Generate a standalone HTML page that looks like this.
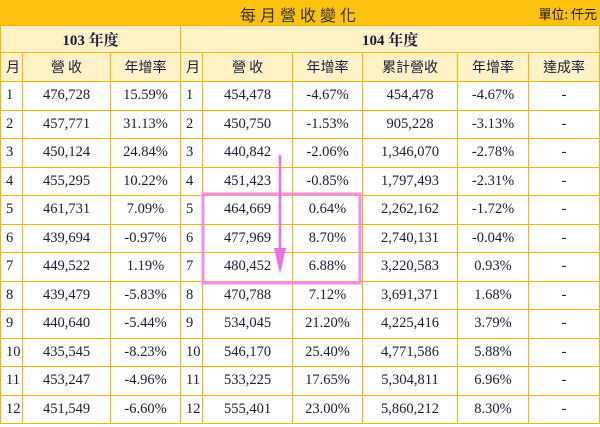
<!DOCTYPE html>
<html><head><meta charset="utf-8"><style>
body{margin:0;width:600px;height:427px;background:#fff;overflow:hidden;position:relative;font-family:"Liberation Serif","Noto Serif CJK SC","Noto Sans CJK TC",serif;color:#1a1a3a}
.title{position:absolute;left:0;top:0;width:600px;height:25px;background:#FDC10F}
.title .t{position:absolute;left:0;width:600px;top:2px;text-align:center;font-size:16px;letter-spacing:4px;font-family:"Noto Sans CJK TC",sans-serif;color:#333}
.title .u{position:absolute;right:3px;top:4px;font-size:13px;font-family:"Noto Sans CJK TC",sans-serif;color:#111}
table{position:absolute;left:0;top:25px;border-collapse:collapse;table-layout:fixed;width:599px}
td{border:1.5px solid #F7B400;text-align:center;font-size:14.5px;padding:0;height:27.5px;white-space:nowrap}
tr.h td{background:#FFF2C6;font-family:"Noto Sans CJK TC",sans-serif;font-size:14px;height:28px}
tr.y td{height:26px;font-weight:bold;font-size:15px;font-family:"Liberation Serif","Noto Serif CJK TC",serif}
td.m{text-align:left;padding-left:5px}
</style></head><body>
<div class="title"><div class="t">每月營收變化</div><div class="u">單位: 仟元</div></div>
<table>
<colgroup><col style="width:22px"><col style="width:88px"><col style="width:70px"><col style="width:22px"><col style="width:90px"><col style="width:70px"><col style="width:95px"><col style="width:71px"><col style="width:71px"></colgroup>
<tr class="h y"><td colspan="3">103 年度</td><td colspan="6">104 年度</td></tr>
<tr class="h"><td class="m">月</td><td>營 收</td><td>年增率</td><td class="m">月</td><td>營 收</td><td>年增率</td><td>累計營收</td><td>年增率</td><td>達成率</td></tr>
<tr><td class="m">1</td><td>476,728</td><td>15.59%</td><td class="m">1</td><td>454,478</td><td>-4.67%</td><td>454,478</td><td>-4.67%</td><td>-</td></tr>
<tr><td class="m">2</td><td>457,771</td><td>31.13%</td><td class="m">2</td><td>450,750</td><td>-1.53%</td><td>905,228</td><td>-3.13%</td><td>-</td></tr>
<tr><td class="m">3</td><td>450,124</td><td>24.84%</td><td class="m">3</td><td>440,842</td><td>-2.06%</td><td>1,346,070</td><td>-2.78%</td><td>-</td></tr>
<tr><td class="m">4</td><td>455,295</td><td>10.22%</td><td class="m">4</td><td>451,423</td><td>-0.85%</td><td>1,797,493</td><td>-2.31%</td><td>-</td></tr>
<tr><td class="m">5</td><td>461,731</td><td>7.09%</td><td class="m">5</td><td>464,669</td><td>0.64%</td><td>2,262,162</td><td>-1.72%</td><td>-</td></tr>
<tr><td class="m">6</td><td>439,694</td><td>-0.97%</td><td class="m">6</td><td>477,969</td><td>8.70%</td><td>2,740,131</td><td>-0.04%</td><td>-</td></tr>
<tr><td class="m">7</td><td>449,522</td><td>1.19%</td><td class="m">7</td><td>480,452</td><td>6.88%</td><td>3,220,583</td><td>0.93%</td><td>-</td></tr>
<tr><td class="m">8</td><td>439,479</td><td>-5.83%</td><td class="m">8</td><td>470,788</td><td>7.12%</td><td>3,691,371</td><td>1.68%</td><td>-</td></tr>
<tr><td class="m">9</td><td>440,640</td><td>-5.44%</td><td class="m">9</td><td>534,045</td><td>21.20%</td><td>4,225,416</td><td>3.79%</td><td>-</td></tr>
<tr><td class="m">10</td><td>435,545</td><td>-8.23%</td><td class="m">10</td><td>546,170</td><td>25.40%</td><td>4,771,586</td><td>5.88%</td><td>-</td></tr>
<tr><td class="m">11</td><td>453,247</td><td>-4.96%</td><td class="m">11</td><td>533,225</td><td>17.65%</td><td>5,304,811</td><td>6.96%</td><td>-</td></tr>
<tr><td class="m">12</td><td>451,549</td><td>-6.60%</td><td class="m">12</td><td>555,401</td><td>23.00%</td><td>5,860,212</td><td>8.30%</td><td>-</td></tr>
</table>
<svg style="position:absolute;left:0;top:0" width="600" height="427">
<rect x="203" y="194" width="157" height="89" fill="none" stroke="#F78CE8" stroke-width="3"/>
<line x1="280" y1="155" x2="280" y2="255" stroke="#F070E0" stroke-width="2.5"/>
<polygon points="274,248 286,248 280,274" fill="#F070E0"/>
</svg>
</body></html>
